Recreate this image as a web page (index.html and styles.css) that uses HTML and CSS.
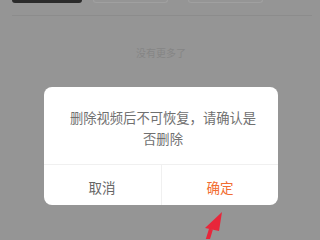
FILE: index.html
```html
<!DOCTYPE html>
<html>
<head>
<meta charset="utf-8">
<link rel="stylesheet" href="styles.css">
</head>
<body>
<div class="page">
  <div class="tabs">
    <div class="tab tab-active"></div>
    <div class="tab tab-outline"></div>
    <div class="tab tab-outline"></div>
  </div>
  <div class="rule"></div>
  <div class="nomore">没有更多了</div>
  <div class="dialog">
    <div class="msg">删除视频后不可恢复，请确认是<br>否删除</div>
    <div class="actions">
      <div class="btn cancel">取消</div>
      <div class="btn ok">确定</div>
    </div>
  </div>
  <svg class="arrow" width="30" height="30" viewBox="0 0 30 30">
    <polygon points="26,0 9,16 23,19" fill="#e8263a"/>
    <line x1="15" y1="17" x2="11" y2="30" stroke="#e8263a" stroke-width="4"/>
  </svg>
</div>
</body>
</html>
```
FILE: styles.css
```css
html, body {
  margin: 0;
  padding: 0;
  background: #959595;
}
.page {
  position: relative;
  width: 320px;
  height: 239px;
  overflow: hidden;
  font-family: "Noto Sans CJK SC", "Noto Sans", sans-serif;
}
.tabs {
  display: flex;
  padding-left: 12px;
  height: 5px;
  margin-top: -3px;
}
.tab {
  height: 6px;
  border-radius: 3px;
  box-sizing: border-box;
}
.tab-active {
  width: 70px;
  background: #2b2b2b;
}
.tab-outline {
  width: 75px;
  border: 1px solid #a0a0a0;
  border-top: none;
}
.tab-outline:nth-child(2) { margin-left: 11px; }
.tab-outline:nth-child(3) { margin-left: 20px; }
.rule {
  margin: 13px 8px 0 12px;
  height: 1px;
  background: #8c8c8c;
}
.nomore {
  margin-top: 31px;
  text-align: center;
  font-size: 10px;
  line-height: 12px;
  color: #858585;
  padding-left: 2px;
}
.dialog {
  position: absolute;
  left: 44px;
  top: 87px;
  width: 234px;
  height: 118px;
  background: #fff;
  border-radius: 8px;
  display: flex;
  flex-direction: column;
}
.msg {
  height: 78px;
  box-sizing: border-box;
  padding-top: 20px;
  padding-left: 4px;
  text-align: center;
  font-size: 13.3px;
  line-height: 21px;
  color: #707070;
  border-bottom: 1px solid #f0f0f0;
}
.actions {
  flex: 1;
  display: flex;
}
.btn {
  flex: 1;
  display: flex;
  align-items: center;
  justify-content: center;
  font-size: 13.5px;
  padding-top: 4px;
}
.cancel {
  color: #666;
  border-right: 1px solid #f0f0f0;
  padding-right: 1px;
}
.ok {
  color: #f26d32;
}
.arrow {
  position: absolute;
  left: 196px;
  top: 212px;
}
```
